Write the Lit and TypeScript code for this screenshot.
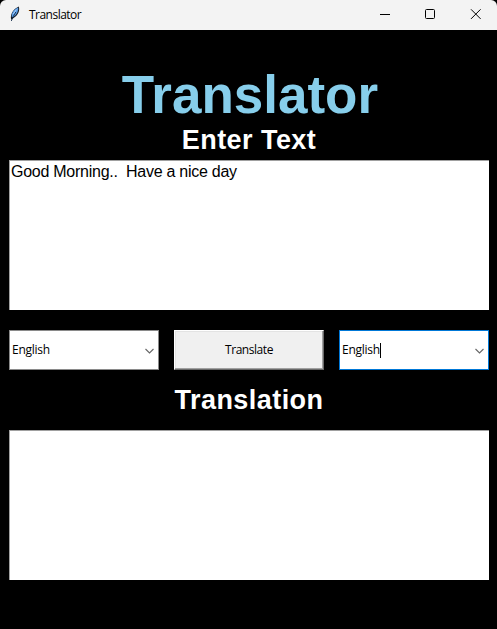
import { LitElement, html, css } from "lit";
import { customElement, property } from "lit/decorators.js";

@customElement("language-box")
class LanguageBox extends LitElement {
  @property() value = "";
  @property({ type: Boolean, reflect: true }) active = false;

  static styles = css`
    :host {
      box-sizing: border-box;
      display: flex;
      align-items: center;
      justify-content: space-between;
      width: 150px;
      height: 40px;
      padding: 0 3px 0 2px;
      border: 1px solid #8a8a8a;
      background: #fff;
      color: #000;
      letter-spacing: -0.25px;
    }
    :host([active]) {
      border-color: #0078d7;
    }
    .value {
      display: flex;
      align-items: center;
    }
    .caret {
      width: 1px;
      height: 15px;
      background: #000;
    }
    svg {
      display: block;
      margin-top: 3px;
    }
  `;

  render() {
    return html`
      <span class="value">${this.value}${this.active ? html`<i class="caret"></i>` : ""}</span>
      <svg width="11" height="7" viewBox="0 0 11 7" fill="none" stroke="#666" stroke-width="1.1">
        <path d="M1.5 1 5.5 5 9.5 1" />
      </svg>
    `;
  }
}

@customElement("app-root")
class AppRoot extends LitElement {
  static styles = css`
    :host {
      display: flex;
      flex-direction: column;
      width: 497px;
      height: 629px;
      overflow: hidden;
      background: #000;
      font: 12px/16px "Open Sans", "Noto Sans", sans-serif;
      color: #000;
    }
    .bar {
      display: flex;
      align-items: center;
      height: 30px;
      background: #f3f3f3;
      border-radius: 6px 6px 0 0;
    }
    .feather {
      margin: 0 6px 2px 7px;
    }
    .name {
      flex: 1;
      letter-spacing: -0.52px;
    }
    .controls {
      display: flex;
    }
    svg {
      display: block;
    }
    .body {
      display: flex;
      flex-direction: column;
      padding: 0 8px 0 9px;
    }
    h1,
    h2 {
      margin: 0;
      text-align: center;
      font-family: "Liberation Sans", Arial, sans-serif;
      font-weight: 700;
    }
    h1 {
      padding: 35px 0 0 2px;
      font-size: 53px;
      line-height: 60px;
      color: #87ceeb;
    }
    h2 {
      font-size: 27px;
      line-height: 30px;
      letter-spacing: 0.45px;
      color: #fff;
    }
    .area {
      box-sizing: border-box;
      height: 150px;
      padding: 1px;
      border: solid #a0a0a0;
      border-width: 1px 0 0 1px;
      background: #fff;
      font: 16px/20px "Liberation Sans", Arial, sans-serif;
      letter-spacing: -0.26px;
      white-space: pre-wrap;
    }
    .source {
      margin-top: 5px;
    }
    .row {
      display: flex;
      justify-content: space-between;
      margin: 20px 0 15px;
    }
    .result {
      margin-top: 15px;
    }
    .go {
      box-sizing: border-box;
      width: 150px;
      height: 40px;
      padding: 0;
      border: 1px solid;
      border-color: #fff #696969 #696969 #fff;
      border-radius: 0;
      box-shadow: inset -1px -1px #a0a0a0, inset 1px 1px #e3e3e3;
      background: #f0f0f0;
      color: #000;
      font: inherit;
      letter-spacing: -0.45px;
    }
  `;

  render() {
    return html`
      <header class="bar">
        <svg class="feather" width="16" height="16" viewBox="0 0 16 16">
          <path d="M4.2 13.8C3 9 5.6 3.4 11.8.6c1.2 3.9-.2 8.3-5.2 11.5Z" fill="#141a22" />
          <path d="M4.8 11C4.3 7 6.6 3.3 11.2 1.5c.5 3.3-1.100 6.900-5 9.600Z" fill="#5a9ce5" />
          <path d="M8.800 6 6.200 10.600 4.300 15" fill="none" stroke="#17304e" stroke-width=".9" />
          <path d="M9.400 3.500 6.300 8" fill="none" stroke="#a9d1fb" stroke-width="1" />
        </svg>
        <span class="name">Translator</span>
        <span class="controls">
          <svg width="45" height="30" viewBox="0 0 45 30" fill="none" stroke="#000">
            <path d="M18 14.5h10" />
          </svg>
          <svg width="45" height="30" viewBox="0 0 45 30" fill="none" stroke="#000">
            <rect x="18.5" y="9.5" width="9" height="9" rx="1" />
          </svg>
          <svg width="45" height="30" viewBox="0 0 45 30" fill="none" stroke="#000">
            <path d="m19 9.3 9.6 9.6M28.6 9.3 19 18.9" />
          </svg>
        </span>
      </header>
      <main class="body">
        <h1>Translator</h1>
        <h2>Enter Text</h2>
        <div class="area source">Good Morning..  Have a nice day</div>
        <div class="row">
          <language-box value="English"></language-box>
          <button class="go">Translate</button>
          <language-box value="English" active></language-box>
        </div>
        <h2>Translation</h2>
        <div class="area result"></div>
      </main>
    `;
  }
}
